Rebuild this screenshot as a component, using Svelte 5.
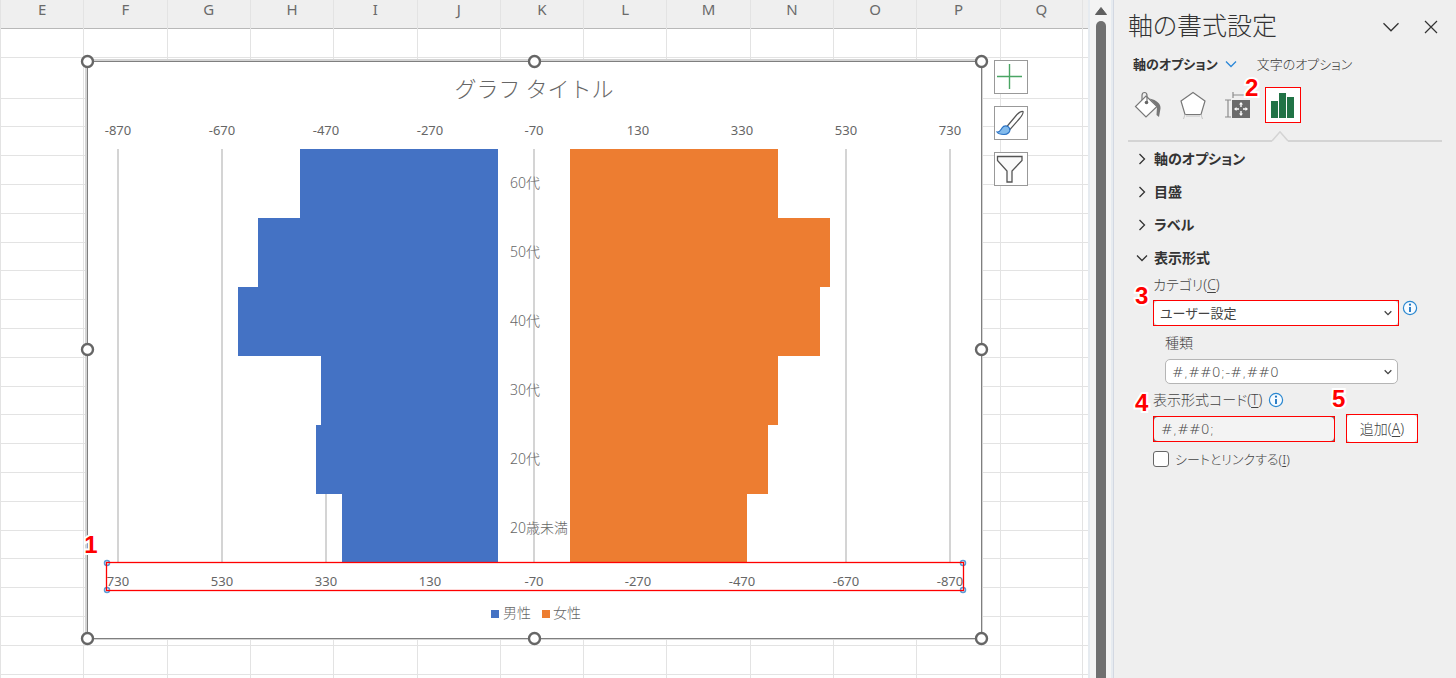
<script lang="ts">
  const COLUMNS = ['E', 'F', 'G', 'H', 'I', 'J', 'K', 'L', 'M', 'N', 'O', 'P', 'Q'];
  const ROW_PATTERN = [28, 29, 29, 29, 29];
  const ROWS = [29, 41, ...Array.from({ length: 40 }, (_, i) => ROW_PATTERN[i % 5])];

  type AgeGroup = { label: string; male: number; female: number };

  const groups: AgeGroup[] = [
    { label: '60代', male: 380, female: 400 },
    { label: '50代', male: 460, female: 500 },
    { label: '40代', male: 500, female: 480 },
    { label: '30代', male: 340, female: 400 },
    { label: '20代', male: 350, female: 380 },
    { label: '20歳未満', male: 300, female: 340 }
  ];
  const ticks = [-870, -670, -470, -270, -70, 130, 330, 530, 730];

  // plot area, in chart units
  const PLOT = { left: 31, top: 88, width: 832, height: 414 };
  const MIN = -870;
  const MAX = 730;
  const band = PLOT.height / groups.length;
  const scale = PLOT.width / (MAX - MIN);

  const xFemale = (v: number) => PLOT.left + (v - MIN) * scale;
  const xMale = (v: number) => PLOT.left + (MAX - v) * scale;

  const handles = [
    [0, 0], [447, 0], [894, 0],
    [0, 288], [894, 288],
    [0, 577], [447, 577], [894, 577]
  ];

  const closedSections = ['軸のオプション', '目盛', 'ラベル'];

  let category = $state('ユーザー設定');
  let kind = $state('#,##0;-#,##0');
  let code = $state('#,##0;');
  let linked = $state(false);
</script>

{#snippet chevron(className: string)}
  <svg class={className} viewBox="0 0 12 12" aria-hidden="true">
    <path d="M1 3.5 6 8.5 11 3.5" fill="none" stroke="currentColor" stroke-width="1.3" vector-effect="non-scaling-stroke" />
  </svg>
{/snippet}

{#snippet info()}
  <svg class="info" viewBox="0 0 16 16" aria-hidden="true">
    <circle cx="8" cy="8" r="6.6" fill="#f7fbff" stroke="#2b88d0" stroke-width="1.2" />
    <path d="M8 7v5" stroke="#1a73c0" stroke-width="1.8" />
    <circle cx="8" cy="4.7" r="1.1" fill="#1a73c0" />
  </svg>
{/snippet}

<div class="app">
  <main class="sheet">
    <div class="columns">
      {#each COLUMNS as column}
        <div class="column"><span>{column}</span></div>
      {/each}
    </div>
    <div class="rows">
      {#each ROWS as height}
        <div class="row" style="height: {height}px"></div>
      {/each}
    </div>

    <svg class="chart" viewBox="0 0 895 578" role="img" aria-label="グラフ タイトル">
      <rect x="0" y="0" width="894" height="577" fill="#fff" stroke="#d4d4d4" stroke-width="4" />
      <rect x="0.5" y="0.5" width="894" height="577" fill="#fff" stroke="#7f7f7f" />
      <text class="title" x="447" y="36">グラフ タイトル</text>

      {#each ticks as tick, i}
        <line x1={xFemale(tick)} x2={xFemale(tick)} y1={PLOT.top} y2={PLOT.top + PLOT.height} stroke="#d4d4d4" stroke-width="2" />
        <text class="tick" x={xFemale(tick)} y="74">{tick}</text>
        <text class="tick" x={xFemale(tick)} y="525">{ticks[ticks.length - 1 - i]}</text>
      {/each}

      <g shape-rendering="crispEdges">
        {#each groups as group, i}
          <rect x={xMale(group.male)} y={PLOT.top + i * band} width={group.male * scale} height={band} fill="#4472c4" />
          <rect x={xFemale(0)} y={PLOT.top + i * band} width={group.female * scale} height={band} fill="#ed7d31" />
        {/each}
      </g>
      {#each groups as group, i}
        <text class="group" x="423" y={PLOT.top + i * band + 39}>{group.label}</text>
      {/each}

      <rect x="404" y="549" width="8" height="8" fill="#4472c4" />
      <text class="legend" x="416" y="557">男性</text>
      <rect x="455" y="549" width="8" height="8" fill="#ed7d31" />
      <text class="legend" x="466" y="557">女性</text>

      {#each [[20, 502], [876, 502], [20, 529], [876, 529]] as [x, y]}
        <circle cx={x} cy={y} r="2.5" fill="#fff" stroke="#5b9bd5" stroke-width="1.5" />
      {/each}
      <rect x="19.5" y="501.5" width="857" height="28" fill="none" stroke="#f00" stroke-width="1.3" />

      {#each handles as [x, y]}
        <circle cx={x + 0.5} cy={y + 0.5} r="5.5" fill="#fff" stroke="#666" stroke-width="2.4" />
      {/each}
      <text class="step-mark" x="4" y="492">1</text>
    </svg>

    <div class="chart-tools">
      <button aria-label="グラフ要素">
        <svg viewBox="0 0 32 32"><path d="M2 15.5h25M14.5 3v25" stroke="#4aa564" stroke-width="1.4" /></svg>
      </button>
      <button aria-label="グラフ スタイル">
        <svg viewBox="0 0 32 32">
          <path d="M11.5 20 22 7.5Q26 3.7 28 4.5 28.6 6.5 25 11L15 22.5Z" fill="#fff" stroke="#555" stroke-width="1.2" />
          <path d="M2 25c3 .3 3.5-1.500 5-4 2-3 6-2.500 7.500.2C16 25 12.500 27.500 9 27.500 5.500 27.500 3 26.500 2 25Z" fill="#83bbec" stroke="#2a72c4" stroke-width="1.2" />
        </svg>
      </button>
      <button aria-label="グラフ フィルター">
        <svg viewBox="0 0 32 32"><path d="M2.5 3.5h24.500v4L17 18v11h-5V18L2.500 7.500Z" fill="#fafafa" stroke="#555" stroke-width="1.3" /></svg>
      </button>
    </div>
  </main>

  <div class="scrollbar">
    <svg viewBox="0 0 12 8" aria-hidden="true"><path d="M6 .5 11.5 7.5H.5Z" fill="#606060" stroke="#606060" stroke-linejoin="round" /></svg>
    <div class="thumb"></div>
  </div>

  <aside class="pane">
    <header>
      <h1>軸の書式設定</h1>
      <button class="plain" aria-label="作業ウィンドウ オプション">{@render chevron('caret-large')}</button>
      <button class="plain" aria-label="閉じる">
        <svg class="close" viewBox="0 0 14 14"><path d="M1 1 13 13M13 1 1 13" stroke="#333" stroke-width="1.2" /></svg>
      </button>
    </header>

    <nav class="tabs">
      <button class="plain current">軸のオプション{@render chevron('caret-tab')}</button>
      <button class="plain">文字のオプション</button>
    </nav>

    <div class="icons">
      <button class="plain" aria-label="塗りつぶしと線">
        <svg viewBox="0 0 28 28">
          <path d="M12 5 23 15.5 12 26 1.5 15.5Z" fill="#fff" stroke="#777" stroke-width="1.2" />
          <path d="M8 9V4.5C8 .5 13 .5 13 4.5V12" fill="none" stroke="#777" stroke-width="1.2" />
          <circle cx="12.5" cy="11.5" r="1.8" fill="#666" />
          <path d="M15.5 7.5C23 9 27 13 26.5 17.5L25 26 22.5 24 23 15.5Z" fill="#777" />
        </svg>
      </button>
      <button class="plain" aria-label="効果">
        <svg viewBox="0 0 28 28">
          <path d="M14 1.5 26 10 22 23.5H6L2 10Z" fill="#fff" stroke="#777" stroke-width="1.2" />
          <path d="M6 23.5 4.5 28M22 23.5 23.5 28M7 25H21" fill="none" stroke="#c4c4c4" />
        </svg>
      </button>
      <button class="plain" aria-label="サイズとプロパティ">
        <svg viewBox="0 0 28 28">
          <path d="M9 4H21M9 1V7M4 9V26M1 9H7M1 26H7" stroke="#8c8c8c" stroke-width="1.2" />
          <rect x="8" y="9" width="18" height="18" fill="#6b6b6b" />
          <path d="M17 13V16M17 20V23M12 18H15M19 18H22" stroke="#fff" stroke-width="1.4" />
          <path d="M17 11 19 13.5H15ZM17 25 15 22.5H19ZM10 18 12.5 16V20ZM24 18 21.5 16V20Z" fill="#fff" />
        </svg>
      </button>
      <button class="plain marked" aria-label="軸のオプション">
        <svg viewBox="0 0 28 28" shape-rendering="crispEdges"><path d="M2 10H9V27H2ZM10 2H17V27H10ZM18 6H25V27H18Z" fill="#217346" /></svg>
        <span class="mark mark-above">2</span>
      </button>
    </div>
    <div class="divider">
      <span></span>
      <svg viewBox="0 0 16 11" aria-hidden="true"><path d="M0 10 8 .8 16 10" fill="none" stroke="#d4d4d4" stroke-width="1.5" /></svg>
      <span></span>
    </div>

    {#each closedSections as section}
      <h2><button class="plain" aria-expanded="false">{@render chevron('caret closed')}{section}</button></h2>
    {/each}
    <h2><button class="plain" aria-expanded="true">{@render chevron('caret')}表示形式</button></h2>

    <div class="format">
      <label class="caption" for="category">カテゴリ(<u>C</u>)</label>
      <div class="line category">
        <div class="select-box boxed">
          <select id="category" bind:value={category}>
            <option>ユーザー設定</option>
          </select>
          {@render chevron('caret-select')}
          <span class="mark mark-left">3</span>
        </div>
        {@render info()}
      </div>

      <div class="nested">
        <label class="caption" for="kind">種類</label>
        <div class="select-box">
          <select id="kind" class="code-text" bind:value={kind}>
            <option>#,##0;-#,##0</option>
          </select>
          {@render chevron('caret-select')}
        </div>
      </div>

      <div class="line caption">
        <label for="code">表示形式コード(<u>T</u>)</label>
        {@render info()}
      </div>
      <div class="line code-line">
        <div class="input-box boxed">
          <input id="code" class="code-text" type="text" bind:value={code} />
          <span class="mark mark-left">4</span>
        </div>
        <div class="add-box boxed">
          <button class="plain add">追加(<u>A</u>)</button>
          <span class="mark mark-left">5</span>
        </div>
      </div>

      <label class="line link">
        <input type="checkbox" bind:checked={linked} />
        <span>シートとリンクする(<u>I</u>)</span>
      </label>
    </div>
  </aside>
</div>

<style>
  :global(body) {
    margin: 0;
  }
  * {
    box-sizing: border-box;
  }
  .app {
    display: flex;
    height: 100vh;
    overflow: hidden;
    background: #efefef;
    color: #333;
    font-family: 'Noto Sans', 'Noto Sans CJK JP', sans-serif;
  }
  button,
  select,
  input {
    font: inherit;
    color: inherit;
  }
  svg {
    display: block;
    flex: none;
  }

  /* worksheet */
  .sheet {
    position: relative;
    flex: 1;
    min-width: 0;
    overflow: hidden;
    background: #fff;
  }
  .columns {
    display: grid;
    grid-template-columns: repeat(13, 1fr);
    height: 100%;
    padding-right: 5px;
    background: linear-gradient(#efefef 28px, #b8b8b8 28px, #b8b8b8 29px, #fff 29px);
  }
  .column {
    border-left: 1px solid #e3e3e3;
    text-align: center;
    font-size: 15px;
    line-height: 19px;
    color: #6a6a6a;
  }
  .column:last-child {
    border-right: 1px solid #e3e3e3;
  }
  .rows {
    position: absolute;
    inset: 29px 0 0;
    overflow: hidden;
  }
  .row {
    border-bottom: 1px solid #e3e3e3;
  }
  .chart {
    position: absolute;
    left: 87px;
    top: 61px;
    width: 895px;
    height: 578px;
    overflow: visible;
  }
  .chart text {
    fill: #666;
  }
  .chart .title {
    font-family: 'Noto Sans CJK JP', sans-serif;
    font-size: 22px;
    font-weight: 300;
    text-anchor: middle;
  }
  .chart .tick {
    font-size: 13px;
    text-anchor: middle;
  }
  .chart .group,
  .chart .legend {
    font-size: 14px;
    font-weight: 300;
  }
  .chart .step-mark {
    font: 700 24px 'Liberation Sans', sans-serif;
    text-anchor: middle;
    fill: #f00;
    stroke: #fff;
    stroke-width: 4px;
    paint-order: stroke;
  }
  .chart-tools {
    position: absolute;
    left: 994px;
    top: 60px;
    display: grid;
    gap: 12px;
  }
  .chart-tools button {
    width: 34px;
    height: 34px;
    padding: 0;
    border: 1px solid #999;
    background: #fff;
  }

  /* scrollbar */
  .scrollbar {
    display: flex;
    flex-direction: column;
    align-items: center;
    gap: 6px;
    width: 25px;
    padding-top: 7px;
    border: solid #e6ebf0;
    border-width: 0 2px;
    background: #f4f4f4;
  }
  .scrollbar svg {
    width: 12px;
    height: 8px;
  }
  .thumb {
    flex: 1;
    width: 10px;
    border-radius: 5px 5px 0 0;
    background: #707070;
  }

  /* task pane */
  .pane {
    flex: none;
    width: 343px;
    padding: 0 14px;
    border-left: 1px solid #d3d8e2;
    font-family: 'Noto Sans', 'Noto Sans CJK JP', sans-serif;
    font-size: 14px;
    line-height: 20px;
    font-feature-settings: 'palt';
  }
  .plain {
    display: flex;
    align-items: center;
    padding: 0;
    border: 0;
    background: none;
  }
  header {
    display: flex;
    align-items: center;
    gap: 24px;
    height: 54px;
    padding-right: 4px;
  }
  h1 {
    flex: 1;
    margin: 0;
    padding-bottom: 4px;
    font-size: 25px;
    line-height: 36px;
    font-weight: 300;
  }
  .caret-large {
    width: 18px;
    height: 18px;
  }
  .close {
    width: 14px;
    height: 14px;
  }
  .tabs {
    display: flex;
    gap: 20px;
    padding-left: 5px;
    font-size: 13px;
  }
  .tabs .plain {
    gap: 7px;
    height: 20px;
    font-weight: 300;
  }
  .tabs .current {
    font-weight: 700;
  }
  .caret-tab {
    width: 12px;
    height: 12px;
    color: #2b88d8;
  }
  .icons {
    display: flex;
    gap: 9px;
    margin-top: 13px;
    padding-left: 2px;
  }
  .icons .plain {
    justify-content: center;
    width: 36px;
    height: 36px;
  }
  .icons .marked {
    position: relative;
    border: 1px solid #f00;
    background: #fff;
  }
  .icons svg {
    width: 28px;
    height: 28px;
  }
  .divider {
    display: flex;
    align-items: flex-end;
    margin-top: 8px;
  }
  .divider span {
    width: 144px;
    border-bottom: 2px solid #d4d4d4;
  }
  .divider span:last-child {
    flex: 1;
  }
  .divider svg {
    width: 16px;
    height: 11px;
  }
  h2 {
    display: flex;
    height: 33px;
    margin: 0;
    padding-left: 8px;
    font-size: 14px;
    font-weight: 700;
  }
  h2 .plain {
    gap: 6px;
  }
  .caret {
    width: 12px;
    height: 12px;
  }
  .closed {
    transform: rotate(-90deg);
  }

  .format {
    padding: 1px 0 0 25px;
    color: #444;
  }
  .line {
    display: flex;
    align-items: center;
  }
  .caption {
    display: flex;
    height: 20px;
  }
  .info {
    width: 16px;
    height: 16px;
  }
  .line.category {
    align-items: flex-start;
    gap: 3px;
    margin: 5px 0 7px;
  }
  .line.caption {
    align-items: center;
    gap: 6px;
  }
  .caption,
  .link {
    font-weight: 300;
  }
  .select-box {
    display: grid;
    grid-template-columns: 1fr 8px 6px;
    align-items: center;
  }
  .boxed {
    position: relative;
    border: 1px solid #f00;
  }
  .category .select-box {
    width: 246px;
    height: 26px;
    background: #ccc;
  }
  select {
    grid-area: 1 / 1 / 2 / -1;
    width: 100%;
    height: 100%;
    padding: 0 6px;
    border: 0;
    border-radius: 4px;
    appearance: none;
    background: #fff;
    font-size: 13px;
  }
  .caret-select {
    grid-area: 1 / 2;
    width: 8px;
    height: 8px;
    pointer-events: none;
  }
  .nested {
    padding-left: 12px;
  }
  .nested .select-box {
    width: 233px;
    height: 25px;
    margin: 6px 0;
  }
  .nested select {
    border: 1px solid #b5b5b5;
    border-radius: 5px;
  }
  .code-text {
    font-family: 'DejaVu Sans', sans-serif;
    font-size: 14px;
    font-weight: 200;
  }
  .code-line {
    gap: 11px;
    margin: 4px 0 6px;
  }
  .input-box {
    width: 182px;
    height: 26px;
    background: #777;
  }
  .input-box input {
    display: block;
    width: 100%;
    height: 100%;
    padding: 0 7px;
    border: 0;
    border-radius: 4px;
    background: #f3f3f3;
  }
  .add-box {
    width: 72px;
    height: 29px;
    background: #ccc;
  }
  .add {
    justify-content: center;
    width: 100%;
    height: 100%;
    border-radius: 4px;
    background: #fff;
    font-weight: 300;
  }
  .link {
    gap: 6px;
    font-size: 13px;
  }
  .link input {
    width: 16px;
    height: 16px;
    margin: 0;
    border: 1px solid #666;
    border-radius: 3px;
    appearance: none;
    background: #fff;
  }
  .link input:checked {
    background: #217346;
  }
  u {
    text-underline-offset: 2px;
  }

  /* numbered step marks */
  .mark {
    position: absolute;
    font: 700 24px/24px 'Liberation Sans', sans-serif;
    color: #f00;
    -webkit-text-stroke: 4px #fff;
    paint-order: stroke;
  }
  .mark-above {
    left: -21px;
    top: -12px;
  }
  .mark-left {
    left: -19px;
    top: -17px;
  }
  .add-box .mark-left {
    left: -15px;
    top: -28px;
  }
  .input-box .mark-left {
    top: -26px;
  }
</style>
